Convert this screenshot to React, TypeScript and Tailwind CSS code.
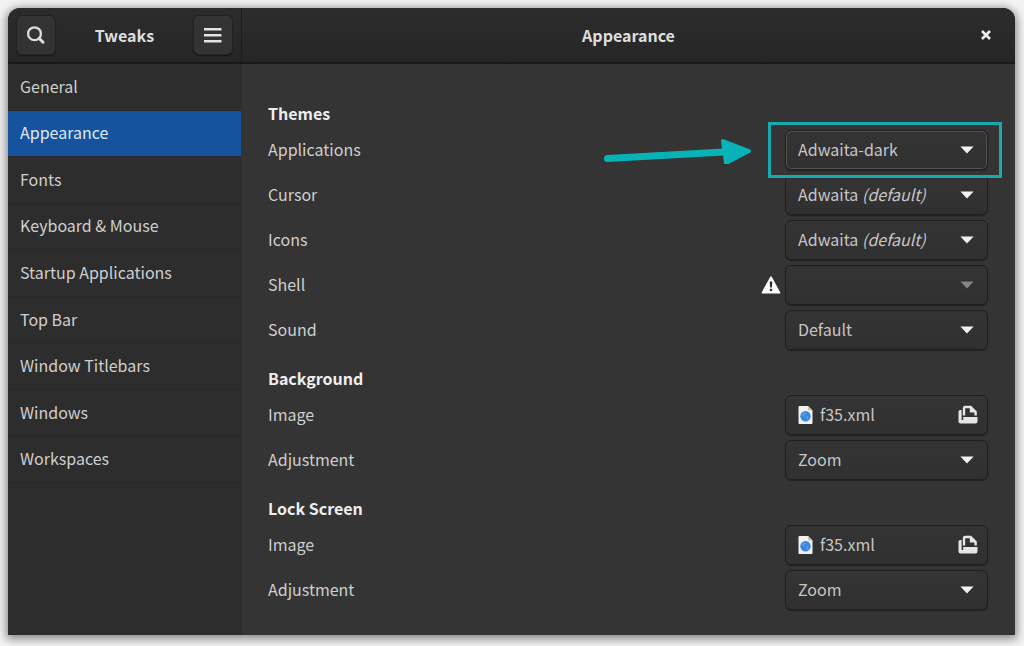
import { useState } from "react";
import type { ReactNode } from "react";
import { clsx } from "clsx";

const PAGES = [
  "General",
  "Appearance",
  "Fonts",
  "Keyboard & Mouse",
  "Startup Applications",
  "Top Bar",
  "Window Titlebars",
  "Windows",
  "Workspaces",
];

const CONTROL =
  "h-10 w-full rounded-md border border-[#1f1f1f] bg-linear-to-b from-[#343434] to-[#303030] shadow-[0_1px_1px_rgba(0,0,0,0.35)]";

function SearchIcon() {
  return (
    <svg width="20" height="20" viewBox="0 0 20 20" fill="none" stroke="#dcdcdc" aria-hidden="true">
      <circle cx="8.5" cy="8.7" r="6.4" strokeWidth="2.3" />
      <path d="M13.2 13.4 17 17.2" strokeWidth="3" strokeLinecap="round" />
    </svg>
  );
}

function MenuIcon() {
  return (
    <svg width="18" height="16" viewBox="0 0 18 16" fill="#e4e4e4" aria-hidden="true">
      <path d="M0 1h17.500v2.500H0zM0 7h17.500v2.500H0zM0 13h17.500v2.500H0z" />
    </svg>
  );
}

function CloseIcon() {
  return (
    <svg width="10" height="10" viewBox="0 0 10 10" stroke="#eeeeee" strokeWidth="2.6" aria-hidden="true">
      <path d="M1 1l8 8M9 1 1 9" />
    </svg>
  );
}

function WarningIcon() {
  return (
    <svg width="20" height="18" viewBox="0 0 20 18" role="img" aria-label="Warning">
      <path d="M10 1.2 18.6 16.8H1.4z" fill="#fff" stroke="#fff" strokeWidth="1.6" strokeLinejoin="round" />
      <path d="M8.7 5.6h2.6l-.4 5.8H9.1zM8.8 12.8h2.4v2.2H8.8z" fill="#2c2c2c" />
    </svg>
  );
}

function XmlFileIcon() {
  return (
    <svg width="15" height="18" viewBox="0 0 15 18" aria-hidden="true">
      <path d="M1.5 0H10l4.5 4.5V17a1 1 0 0 1-1 1h-12a1 1 0 0 1-1-1V1a1 1 0 0 1 1-1z" fill="#f3f1ee" />
      <path d="M10 0l4.5 4.5H10z" fill="#c9c6c2" />
      <circle cx="7.5" cy="10.2" r="5.2" fill="#3b86e0" />
      <path d="M4.2 8.2c1.2-1.8 3.2-1.6 3.8-.9-.2 1.4-1.8 1.3-2 2.6-.8.3-1.7-.6-1.8-1.7zM8.4 10.4c1.6-.3 2.4.4 2.2 1.4-.6 1.2-1.4 1.6-2 1.4z" fill="#5f9fe9" />
    </svg>
  );
}

function OpenDocumentIcon() {
  return (
    <svg width="20" height="20" viewBox="0 0 20 20" aria-hidden="true">
      <path d="M3.600 5H2.300A1.800 1.800 0 0 0 .5 6.800V16.400A2.100 2.100 0 0 0 2.600 18.500H17.400A2.100 2.100 0 0 0 19.500 16.400V12H5.200V15H3.600z" fill="#e6e6e6" />
      <path d="M6 10.600V3.200A1.200 1.200 0 0 1 7.200 2H12.600L17.600 7V10.600" fill="none" stroke="#e6e6e6" strokeWidth="2.400" />
      <path d="M11.800 2v5.400h5.800z" fill="#e6e6e6" />
    </svg>
  );
}

interface SelectProps {
  id: string;
  options: string[];
  disabled?: boolean;
  focused?: boolean;
  // GNOME marks the stock theme with an italic suffix after its name
  stock?: boolean;
}

function Select({ id, options, disabled, focused, stock }: SelectProps) {
  const [value, setValue] = useState(options[0]);
  const italic = stock && value === options[0];
  return (
    <div className="grid items-center">
      <select
        id={id}
        value={value}
        disabled={disabled}
        onChange={(e) => setValue(e.target.value)}
        className={clsx(
          CONTROL,
          "col-start-1 row-start-1 appearance-none pr-10 pb-0.5 pl-3 outline-none",
          focused && "inset-ring-1 inset-ring-[#545454]",
          italic ? "text-transparent" : "text-[#c6c6c6]"
        )}
      >
        {options.map((option) => (
          <option key={option} value={option} className="bg-[#343434] text-[#dcdcdc]">
            {option}
          </option>
        ))}
      </select>
      {italic && (
        <span className="pointer-events-none col-start-1 row-start-1 pb-0.5 pl-[13px] text-[#c6c6c6]" aria-hidden="true">
          {value} <i>(default)</i>
        </span>
      )}
      <svg
        width="14"
        height="8"
        viewBox="0 0 14 8"
        className="pointer-events-none col-start-1 row-start-1 mr-[14px] justify-self-end"
        aria-hidden="true"
      >
        <path d="M.4.5h13.2L7 7.4z" fill={disabled ? "#858585" : "#f2f2f2"} />
      </svg>
    </div>
  );
}

function FileButton({ id, file }: { id: string; file: string }) {
  return (
    <button id={id} type="button" className={clsx(CONTROL, "flex items-center pr-[9px] pl-3 text-[#c6c6c6]")}>
      <XmlFileIcon />
      <span className="ml-[7px] flex-1 pb-0.5 text-left">{file}</span>
      <OpenDocumentIcon />
    </button>
  );
}

function Row({ id, label, warning, children }: { id: string; label: string; warning?: boolean; children: ReactNode }) {
  return (
    <div className="flex h-[45px] items-center">
      <label htmlFor={id} className="flex-1 pb-0.5">
        {label}
      </label>
      {warning && (
        <span className="mr-1">
          <WarningIcon />
        </span>
      )}
      <div className="relative w-[203px]">{children}</div>
    </div>
  );
}

function Section({ title, children }: { title: string; children: ReactNode }) {
  return (
    <section>
      <h2 className="h-10 pt-4 leading-5 font-bold text-[#eeeeee]">{title}</h2>
      {children}
    </section>
  );
}

// Teal box and arrow drawn around the Applications drop-down
function Callout() {
  return (
    <>
      <div className="pointer-events-none absolute -inset-y-2 -right-3.5 -left-[17px] z-10 border-3 border-[#17a9b0]" />
      <svg
        width="150"
        height="30"
        viewBox="0 0 150 30"
        className="pointer-events-none absolute top-1 right-full mr-[33px]"
        aria-hidden="true"
      >
        <path d="M5.500 24.500 122 18" stroke="#08b3b8" strokeWidth="7" strokeLinecap="round" />
        <path d="M121 7 147 17 124 29z" fill="#08b3b8" stroke="#08b3b8" strokeWidth="4" strokeLinejoin="round" />
      </svg>
    </>
  );
}

export default function App() {
  const [page, setPage] = useState("Appearance");

  return (
    <div className="flex min-h-screen bg-[#f4f4f4] pt-2 pr-[9px] pb-[11px] pl-2 font-['Noto_Sans_CJK_SC','Noto_Sans',sans-serif] text-base text-[#cfcfcf]">
      <div className="flex flex-1 flex-col overflow-hidden rounded-t-xl bg-[#343434] shadow-[0_2px_10px_2px_rgba(0,0,0,0.45)]">
        <header className="flex h-14 border-b-2 border-[#191919] bg-linear-to-b from-[#2c2c2c] to-[#262626] font-bold text-[#dedede]">
          <div className="flex w-[234px] items-center justify-between border-r border-[#1d1d1d] px-2">
            <button type="button" aria-label="Search" className="flex size-10 items-center justify-center rounded-md border border-[#222222] bg-[#333333] shadow-[0_1px_1px_rgba(0,0,0,0.4)]">
              <SearchIcon />
            </button>
            <span>Tweaks</span>
            <button type="button" aria-label="Menu" className="flex size-10 items-center justify-center rounded-md border border-[#222222] bg-[#333333] shadow-[0_1px_1px_rgba(0,0,0,0.4)]">
              <MenuIcon />
            </button>
          </div>
          <div className="grid flex-1 grid-cols-[1fr_auto_1fr] items-center">
            <h1 className="col-start-2">Appearance</h1>
            <button type="button" aria-label="Close" className="mr-6 justify-self-end">
              <CloseIcon />
            </button>
          </div>
        </header>

        <div className="flex flex-1">
          <nav className="w-[233px] bg-[#2d2d2d]">
            <ul className="grid h-[419px] auto-rows-fr">
              {PAGES.map((name) => (
                <li key={name} className="grid border-b border-[#292929]">
                  <button
                    type="button"
                    onClick={() => setPage(name)}
                    className={clsx("px-3 pb-0.5 text-left", name === page && "bg-[#15539e] text-[#dfe8f3]")}
                  >
                    {name}
                  </button>
                </li>
              ))}
            </ul>
          </nav>

          <main className="flex-1 border-l border-[#303030] pt-[23px] pr-[27px] pl-[26px]">
            <Section title="Themes">
              <Row id="applications" label="Applications">
                <Select id="applications" options={["Adwaita-dark", "Adwaita"]} focused />
                <Callout />
              </Row>
              <Row id="cursor" label="Cursor">
                <Select id="cursor" options={["Adwaita"]} stock />
              </Row>
              <Row id="icons" label="Icons">
                <Select id="icons" options={["Adwaita"]} stock />
              </Row>
              <Row id="shell" label="Shell" warning>
                <Select id="shell" options={[""]} disabled />
              </Row>
              <Row id="sound" label="Sound">
                <Select id="sound" options={["Default"]} />
              </Row>
            </Section>
            <Section title="Background">
              <Row id="background-image" label="Image">
                <FileButton id="background-image" file="f35.xml" />
              </Row>
              <Row id="background-adjustment" label="Adjustment">
                <Select id="background-adjustment" options={["Zoom"]} />
              </Row>
            </Section>
            <Section title="Lock Screen">
              <Row id="lock-image" label="Image">
                <FileButton id="lock-image" file="f35.xml" />
              </Row>
              <Row id="lock-adjustment" label="Adjustment">
                <Select id="lock-adjustment" options={["Zoom"]} />
              </Row>
            </Section>
          </main>
        </div>
      </div>
    </div>
  );
}
